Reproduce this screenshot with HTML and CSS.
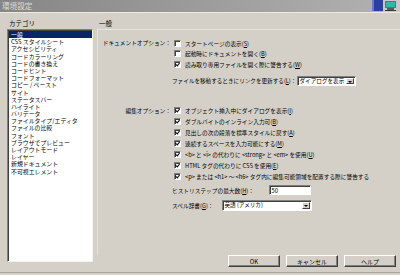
FILE: index.html
```html
<!DOCTYPE html>
<html lang="ja">
<head>
<meta charset="utf-8">
<title>環境設定</title>
<link rel="stylesheet" href="styles.css">
</head>
<body>
<div class="window">
  <div class="titlebar">
    <span class="title">環境設定</span>
    <svg class="tray" width="28" height="12" viewBox="0 0 28 12">
      <rect x="0" y="0" width="11" height="11" fill="#2c3f9c"/>
      <rect x="0" y="0" width="2" height="11" fill="#6b7ad0"/>
      <rect x="11" y="0" width="17" height="12" fill="#c8c8c8"/>
      <rect x="13" y="1" width="11" height="7" fill="#1f8f8a"/>
      <rect x="14" y="2" width="9" height="5" fill="#35b5a8"/>
      <rect x="15" y="8" width="7" height="2" fill="#5a5a5a"/>
      <rect x="13" y="10" width="11" height="1" fill="#3a3a3a"/>
    </svg>
  </div>
  <div class="body">
    <div class="left">
      <div class="caption">カテゴリ</div>
      <ul class="list">
        <li class="sel">一般</li>
        <li>CSS スタイルシート</li>
        <li>アクセシビリティ</li>
        <li>コードカラーリング</li>
        <li>コードの書き換え</li>
        <li>コードヒント</li>
        <li>コードフォーマット</li>
        <li>コピー / ペースト</li>
        <li>サイト</li>
        <li>ステータスバー</li>
        <li>ハイライト</li>
        <li>バリデータ</li>
        <li>ファイルタイプ/エディタ</li>
        <li>ファイルの比較</li>
        <li>フォント</li>
        <li>ブラウザでプレビュー</li>
        <li>レイアウトモード</li>
        <li>レイヤー</li>
        <li>新規ドキュメント</li>
        <li>不可視エレメント</li>
      </ul>
    </div>
    <div class="right">
      <div class="caption">一般</div>
      <div class="panel">
        <div class="group doc">
          <div class="glabel">ドキュメントオプション：</div>
          <div class="gbody">
            <div class="cb"><span class="box"></span><span class="t">スタートページの表示(<u>S</u>)</span></div>
            <div class="cb"><span class="box"></span><span class="t">起動時にドキュメントを開く(<u>B</u>)</span></div>
            <div class="cb"><span class="box on"></span><span class="t">読み取り専用ファイルを開く際に警告する(<u>W</u>)</span></div>
            <div class="field link">
              <span class="flabel w-link">ファイルを移動するときにリンクを更新する(<u>L</u>)：</span>
              <span class="select s-link"><span class="val">ダイアログを表示</span><span class="arrow"></span></span>
            </div>
          </div>
        </div>
        <div class="group edit">
          <div class="glabel">編集オプション：</div>
          <div class="gbody">
            <div class="cb tall"><span class="box on"></span><span class="t">オブジェクト挿入中にダイアログを表示(<u>I</u>)</span></div>
            <div class="cb tall"><span class="box on"></span><span class="t">ダブルバイトのインライン入力可(<u>B</u>)</span></div>
            <div class="cb tall"><span class="box on"></span><span class="t">見出しの次の段落を標準スタイルに戻す(<u>A</u>)</span></div>
            <div class="cb tall"><span class="box on"></span><span class="t">連続するスペースを入力可能にする(<u>M</u>)</span></div>
            <div class="cb tall"><span class="box on"></span><span class="t">&lt;b&gt; と &lt;i&gt; の代わりに &lt;strong&gt; と &lt;em&gt; を使用(<u>U</u>)</span></div>
            <div class="cb tall"><span class="box on"></span><span class="t">HTML タグの代わりに CSS を使用(<u>E</u>)</span></div>
            <div class="cb tall"><span class="box on"></span><span class="t">&lt;p&gt; または &lt;h1&gt; ～ &lt;h6&gt; タグ内に編集可能領域を配置する際に警告する</span></div>
            <div class="field hist">
              <span class="flabel w-hist">ヒストリステップの最大数(<u>H</u>)：</span>
              <span class="input">50</span>
            </div>
            <div class="field spell">
              <span class="flabel w-spell">スペル辞書(<u>G</u>)：</span>
              <span class="select s-spell"><span class="val">英語 (アメリカ)</span><span class="arrow"></span></span>
            </div>
          </div>
        </div>
      </div>
      <div class="buttons">
        <span class="btn">OK</span>
        <span class="btn">キャンセル</span>
        <span class="btn">ヘルプ</span>
      </div>
    </div>
  </div>
</div>
</body>
</html>
```
FILE: styles.css
```css
html, body {
  margin: 0;
  padding: 0;
  background: #d4d0c8;
}
body {
  font-family: "Noto Sans CJK JP", "Noto Sans", sans-serif;
  font-size: 6px;
  color: #000;
  text-autospace: no-autospace;
}
.window {
  width: 400px;
  height: 272px;
  border-bottom: 1px solid #a8a49c;
  display: flex;
  flex-direction: column;
  overflow: hidden;
}
.titlebar {
  height: 12px;
  flex: none;
  display: flex;
  align-items: center;
  background: linear-gradient(90deg, #868686, #b2b2b2);
  border-bottom: 1px solid #eceae4;
}
.title {
  color: #dedbd4;
  font-size: 7.6px;
  margin-left: 2px;
  line-height: 12px;
}
.tray {
  margin-left: auto;
  display: block;
}
.body {
  flex: 1;
  display: flex;
  padding: 4px 0 0 7px;
  min-height: 0;
}
.left {
  width: 86px;
  flex: none;
  display: flex;
  flex-direction: column;
}
.caption {
  height: 12px;
  line-height: 12px;
  padding-left: 2px;
  font-size: 6.5px;
  flex: none;
}
.list {
  height: 233px;
  box-sizing: border-box;
  margin: 0;
  padding: 1px 0 0 1px;
  list-style: none;
  background: #fff;
  border-top: 1px solid #808080;
  border-left: 1px solid #808080;
  border-right: 1px solid #f4f3ef;
  border-bottom: 1px solid #f4f3ef;
  box-shadow: inset 1px 1px #404040;
  font-size: 5.9px;
}
.list li {
  height: 7.2px;
  line-height: 7.2px;
  padding-left: 2px;
  white-space: nowrap;
}
.list li.sel {
  background: #0a246a;
  color: #fff;
}
.right {
  flex: 1;
  margin-left: 4px;
  display: flex;
  flex-direction: column;
}
.panel {
  flex: 1;
  border-top: 1px solid #e6e3dc;
  border-left: 1px solid #e6e3dc;
  padding-top: 8px;
  font-size: 5.7px;
}
.group {
  display: grid;
  grid-template-columns: 74px 1fr;
}
.edit {
  margin-top: 18px;
}
.glabel {
  text-align: right;
  padding-right: 1px;
  line-height: 10.5px;
  white-space: nowrap;
}
.edit .glabel {
  line-height: 11px;
}
.gbody {
  display: flex;
  flex-direction: column;
}
.cb {
  display: flex;
  align-items: center;
  gap: 4px;
  height: 10.5px;
  padding-left: 2px;
  white-space: nowrap;
}
.cb.tall {
  height: 11px;
}
.box {
  width: 7px;
  height: 7px;
  flex: none;
  box-sizing: border-box;
  background: #fff;
  border-top: 1px solid #808080;
  border-left: 1px solid #808080;
  border-right: 1px solid #fff;
  border-bottom: 1px solid #fff;
  box-shadow: inset 1px 1px #404040;
  position: relative;
}
.box.on::after {
  content: "";
  position: absolute;
  left: 1px;
  top: 0px;
  width: 2px;
  height: 3px;
  border-right: 1.2px solid #000;
  border-bottom: 1.2px solid #000;
  transform: rotate(40deg);
}
u {
  text-decoration: underline;
  text-underline-offset: 0.5px;
}
.field {
  display: flex;
  align-items: center;
  height: 12px;
  white-space: nowrap;
}
.link {
  margin-top: 5px;
}
.hist {
  margin-top: 2.5px;
}
.spell {
  margin-top: 3px;
}
.flabel {
  flex: none;
}
.w-link { width: 125px; font-size: 5.6px; }
.w-hist { width: 97px; }
.w-spell { width: 50px; }
.select, .input {
  box-sizing: border-box;
  background: #fff;
  border-top: 1px solid #808080;
  border-left: 1px solid #808080;
  border-right: 1px solid #fff;
  border-bottom: 1px solid #fff;
  box-shadow: inset 1px 1px #404040;
  display: flex;
  align-items: center;
  padding-left: 1.5px;
  position: relative;
  overflow: hidden;
}
.val {
  font-size: 5.6px;
}
.s-link {
  width: 59px;
  height: 10px;
}
.s-spell {
  width: 90px;
  height: 11px;
}
.input {
  width: 42px;
  height: 10px;
}
.arrow {
  position: absolute;
  right: 1px;
  top: 1px;
  bottom: 1px;
  width: 8px;
  background: #d4d0c8;
  border-top: 1px solid #fff;
  border-left: 1px solid #fff;
  border-right: 1px solid #404040;
  border-bottom: 1px solid #404040;
  box-sizing: border-box;
}
.arrow::after {
  content: "";
  position: absolute;
  left: 1px;
  top: 2.5px;
  border-left: 2px solid transparent;
  border-right: 2px solid transparent;
  border-top: 2px solid #000;
}
.buttons {
  display: flex;
  justify-content: flex-end;
  gap: 6px;
  padding-right: 4px;
  margin-bottom: 5px;
  flex: none;
}
.btn {
  width: 52px;
  height: 12px;
  box-sizing: border-box;
  display: flex;
  align-items: center;
  justify-content: center;
  background: #d4d0c8;
  border-top: 1px solid #fff;
  border-left: 1px solid #fff;
  border-right: 1px solid #404040;
  border-bottom: 1px solid #404040;
  box-shadow: inset -1px -1px #808080;
}
```
